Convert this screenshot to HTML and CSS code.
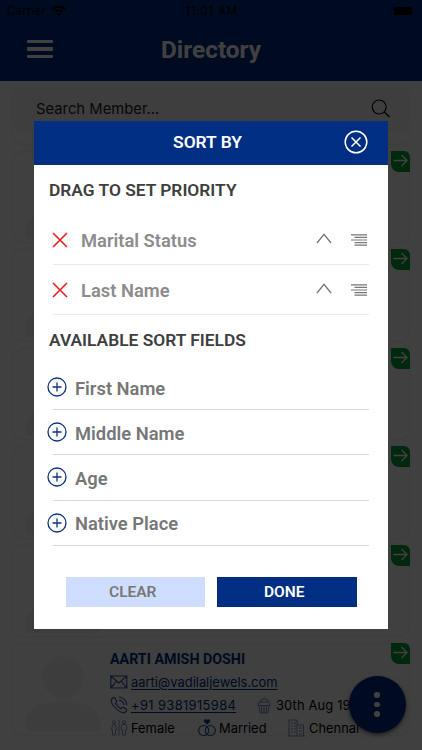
FILE: index.html
```html
<!DOCTYPE html>
<html lang="en">
<head>
<meta charset="utf-8">
<title>Directory</title>
<link rel="stylesheet" href="styles.css">
</head>
<body>
<svg class="defs" width="0" height="0">
  <symbol id="arrow" viewBox="0 0 19 21"><path d="M2.5 9.5H16M10.5 4L16 9.5L10.5 15" fill="none" stroke="#fff" stroke-width="1.4"/></symbol>
  <symbol id="cross" viewBox="0 0 16 16"><path d="M1 1L15 15M15 1L1 15" fill="none" stroke="#ed1b24" stroke-width="1.6"/></symbol>
  <symbol id="up" viewBox="0 0 16 11"><path d="M1 10L8 1.3L15 10" fill="none" stroke="#777" stroke-width="1.3"/></symbol>
  <symbol id="lines" viewBox="0 0 16 12"><path d="M0 .8H16M3.5 3.4H16M0 6H16M3.5 8.6H16M3.5 11.2H16" stroke="#777" stroke-width="1.2"/></symbol>
  <symbol id="plus" viewBox="0 0 20 20"><circle cx="10" cy="10" r="9" fill="none" stroke="#0b3385" stroke-width="1.3"/><path d="M5.5 10H14.5M10 5.5V14.5" stroke="#0b3385" stroke-width="1.3"/></symbol>
</svg>
<div class="app">
  <header>
    <div class="status">
      <span class="carrier">Carrier <svg width="14" height="11" viewBox="0 0 14 11"><path d="M0 3.3Q7-2.5 14 3.3L12.5 5Q7 .5 1.5 5ZM2.6 6Q7 2.4 11.4 6L9.9 7.6Q7 5.3 4.1 7.6ZM5 8.6Q7 7 9 8.6L7 11Z"/></svg></span>
      <span class="time">11:01 AM</span>
      <span class="battery"></span>
    </div>
    <div class="bar">
      <div class="burger"><i></i><i></i><i></i></div>
      <h1>Directory</h1>
    </div>
  </header>
  <div class="search"><span>Search Member...</span>
    <svg width="20" height="20" viewBox="0 0 20 20" fill="none" stroke="#000" stroke-width="1.2"><circle cx="8.2" cy="8" r="7"/><path d="M13.2 13L18.5 18"/></svg>
  </div>
  <main>
    <article class="card partial"></article>
    <article class="card"><div class="avatar"></div><svg class="tag"><use href="#arrow"/></svg></article>
    <article class="card"><div class="avatar"></div><svg class="tag"><use href="#arrow"/></svg></article>
    <article class="card"><div class="avatar"></div><svg class="tag"><use href="#arrow"/></svg></article>
    <article class="card"><div class="avatar"></div><svg class="tag"><use href="#arrow"/></svg></article>
    <article class="card"><div class="avatar"></div><svg class="tag"><use href="#arrow"/></svg></article>
    <article class="card">
      <div class="avatar"></div>
      <div class="info">
        <h2>AARTI AMISH DOSHI</h2>
        <div class="row">
          <svg width="18" height="18" viewBox="0 0 18 18"><path d="M.8 3H16.8V15H.8ZM1 3.2L8.8 10L16.6 3.2M1 14.8L6.4 8M16.6 14.8L11.2 8"/></svg>
          <span class="link">aarti@vadilaljewels.com</span>
        </div>
        <div class="row">
          <svg width="18" height="18" viewBox="0 0 18 18"><path d="M3.5 1.5L1.5 3Q0 6 5 11.5T14.5 16.8L16.5 14.8Q17 14 16 13L13.5 11.3Q12.8 11 12 11.7L11 12.7Q8 11 5.6 7.5L6.5 6.3Q7 5.5 6.4 4.8L5 2Q4.3 1 3.5 1.5ZM9 1Q16 2 16.8 9M9 4Q13 4.6 14 9"/></svg>
          <span class="link phone">+91 9381915984</span>
          <svg class="thin" width="14" height="18" viewBox="0 0 14 18"><path d="M2 10L3 17H11L12 10M1 9.5Q0 6 3 6Q3 3 6 3.5Q7 0 8.5 3.5Q12 3 11.5 6Q14 7 13 9.5ZM4.5 10L5 17M7 10V17M9.5 10L9 17M3 6H11.5"/></svg>
          <span class="date">30th Aug 1970</span>
        </div>
        <div class="row">
          <svg class="thin" width="18" height="18" viewBox="0 0 18 18"><path d="M9 1V17"/><circle cx="4" cy="3.2" r="1.5"/><circle cx="14" cy="3.2" r="1.5"/><path d="M2.8 5.5H5.2L6.7 10.8H5.5V16H2.5V10.8H1.3ZM12.3 5.5H15.7L16.6 6.5V11H15.5V16H12.5V11H11.4V6.5Z"/></svg>
          <span class="gender">Female</span>
          <svg width="18" height="18" viewBox="0 0 18 18"><circle cx="5.7" cy="11.5" r="5"/><circle cx="12.3" cy="11.5" r="5"/><path class="heart" d="M9 5L6.3 2.5Q6 0 9 1.2Q12 0 11.7 2.5Z"/></svg>
          <span class="marital">Married</span>
          <svg class="thin" width="17" height="18" viewBox="0 0 17 18"><path d="M1 17V1H9V17M9 6H15.5V17M0 17H17M3 4H5M6 4H8M3 7H5M6 7H8M3 10H5M6 10H8M3 13H5M6 13H8M11 9H14M11 12H14M11 15H14"/></svg>
          <span class="city">Chennai</span>
        </div>
      </div>
      <svg class="tag"><use href="#arrow"/></svg>
    </article>
  </main>
</div>
<div class="fab"><i></i><i></i><i></i></div>
<div class="overlay">
  <section class="modal">
    <div class="modal-head"><span></span><b>SORT BY</b>
      <svg width="24" height="24" viewBox="0 0 24 24" fill="none" stroke="#fff" stroke-width="1.5"><circle cx="12" cy="12" r="10.8"/><path d="M7.5 7.5L16.5 16.5M16.5 7.5L7.5 16.5"/></svg>
    </div>
    <h3>DRAG TO SET PRIORITY</h3>
    <div class="chosen"><svg class="x"><use href="#cross"/></svg><span>Marital Status</span><svg class="up"><use href="#up"/></svg><svg class="lines"><use href="#lines"/></svg></div>
    <div class="chosen"><svg class="x"><use href="#cross"/></svg><span>Last Name</span><svg class="up"><use href="#up"/></svg><svg class="lines"><use href="#lines"/></svg></div>
    <h3>AVAILABLE SORT FIELDS</h3>
    <div class="field"><svg><use href="#plus"/></svg><span>First Name</span></div>
    <div class="field"><svg><use href="#plus"/></svg><span>Middle Name</span></div>
    <div class="field"><svg><use href="#plus"/></svg><span>Age</span></div>
    <div class="field"><svg><use href="#plus"/></svg><span>Native Place</span></div>
    <div class="actions"><button class="clear">CLEAR</button><button class="done">DONE</button></div>
  </section>
</div>
</body>
</html>
```
FILE: styles.css
```css
* { box-sizing: border-box; }
body { margin: 0; width: 422px; height: 750px; overflow: hidden; position: relative; font-family: Roboto, "Liberation Sans", sans-serif; background: #fff; }
.defs { position: absolute; }
svg { flex: none; display: block; }
h1, h2, h3 { margin: 0; }
.app { height: 750px; overflow: hidden; font-family: Inter, sans-serif; }
header { height: 81px; background: #002e82; }
.status { height: 21px; display: grid; grid-template-columns: 1fr 1fr 1fr; align-items: center; padding: 0 10px 0 7px; font-size: 11.3px; letter-spacing: .3px; }
.carrier { display: flex; gap: 6px; align-items: center; }
.time { text-align: center; letter-spacing: .9px; padding-left: 4px; }
.battery { justify-self: end; width: 18px; height: 8px; border-radius: 2px; background: #000; }
.bar { height: 56px; display: flex; align-items: center; padding-left: 27px; }
.burger { width: 26px; display: grid; gap: 4px; }
.burger i { height: 3.5px; background: #fff; border-radius: 1px; }
h1 { font: 700 24.4px/30px Roboto, sans-serif; color: #fff; margin: 2px 0 0 108px; }
.search { height: 44px; margin: 5px 11px 0; padding: 1px 20px 0 25px; border-radius: 12px; background: #f8f8f8; display: flex; align-items: center; justify-content: space-between; font-size: 14.8px; color: #222; }
.card { position: relative; height: 92.5px; margin: 0 12px 6px; border: 1px solid #f0f2fb; border-radius: 12px; display: flex; background: #fdfdfd; box-shadow: 0 0 3px #eef0fa; }
.card.partial { height: 14.5px; border-radius: 0 0 12px 12px; }
.avatar { flex: none; width: 76px; height: 78px; margin: 11px 0 0 12px; }
.avatar::before { content: ""; display: block; width: 42px; height: 42px; margin: 1px 0 5px 17px; border-radius: 50%; background: #f4f4f4; }
.avatar::after { content: ""; display: block; width: 76px; height: 28px; border-radius: 22px 22px 6px 6px; background: #f4f4f4; }
.tag { position: absolute; right: -1px; top: -1px; width: 19px; height: 21px; background: #00a038; border-radius: 0 6px 0 8px; }
.info { margin: 5px 0 0 9px; }
h2 { font: 700 14.25px/20px Roboto, sans-serif; color: #002e82; }
.row { height: 23px; display: flex; align-items: center; white-space: nowrap; font-size: 12.9px; position: relative; top: 1.5px; }
.row svg { fill: none; stroke: #2b4c9b; stroke-width: 1.1; }
.row .thin { stroke: #6f85b8; stroke-width: .9; }
.row .heart { fill: #002e82; }
.row span { margin-left: 3px; }
.link { color: #002e82; text-decoration: underline; text-underline-offset: 2px; }
.row .phone { letter-spacing: .38px; width: 105px; margin-right: 21px; }
.row .date { margin-left: 5px; letter-spacing: .15px; }
.gender { width: 67px; }
.row .marital { width: 69px; }
.row .city { margin-left: 4px; }
.fab { position: absolute; left: 348.5px; top: 676px; width: 57px; height: 57px; border-radius: 50%; background: #002e82; display: flex; flex-direction: column; align-items: center; justify-content: center; gap: 4px; box-shadow: 0 2px 4px #0008; }
.fab i { width: 5.5px; height: 5.5px; border-radius: 50%; background: #fff; }
.overlay { position: absolute; inset: 0; background: rgba(0,0,0,.75); padding: 121px 34px; }
.modal { width: 354px; height: 508px; background: #fff; }
.modal-head { height: 44px; background: #002e82; color: #fff; display: grid; grid-template-columns: 1fr auto 1fr; align-items: center; font-size: 17.4px; padding: 0 20.5px 3px 13.5px; }
.modal-head b { font-weight: 600; }
.modal-head svg { justify-self: end; }
h3 { font: 600 17.35px/50px Roboto, sans-serif; height: 50px; padding-left: 15px; color: #3e3e3e; }
.chosen { height: 50px; margin: 0 19px; border-bottom: 1px solid #e9e9ed; display: flex; align-items: center; color: #8c8c8c; font-size: 18.35px; font-weight: 600; }
.chosen span { margin: 1.5px 0 0 13.5px; flex: 1; }
.x { width: 16px; height: 16px; margin-left: -1.5px; }
.up { width: 16px; height: 11px; margin: 0 19px 3px 0; }
.lines { width: 16px; height: 12px; margin-right: 2px; }
.field { height: 45.2px; margin: 0 19px; border-bottom: 1px solid #d3d8e6; display: flex; align-items: center; color: #777; font-size: 18.35px; font-weight: 600; }
.field svg { width: 20px; height: 20px; margin-left: -6px; }
.field span { margin-left: 8px; margin-top: 2px; }
.actions { display: flex; gap: 12px; margin: 31.5px 0 0 31.5px; }
button { width: 139.5px; height: 30px; padding: 0 5px 0 0; border: 0; font: 600 15.5px Roboto, sans-serif; }
.clear { background: #cfdeff; color: #777; }
.done { background: #002e82; color: #fff; }
```
